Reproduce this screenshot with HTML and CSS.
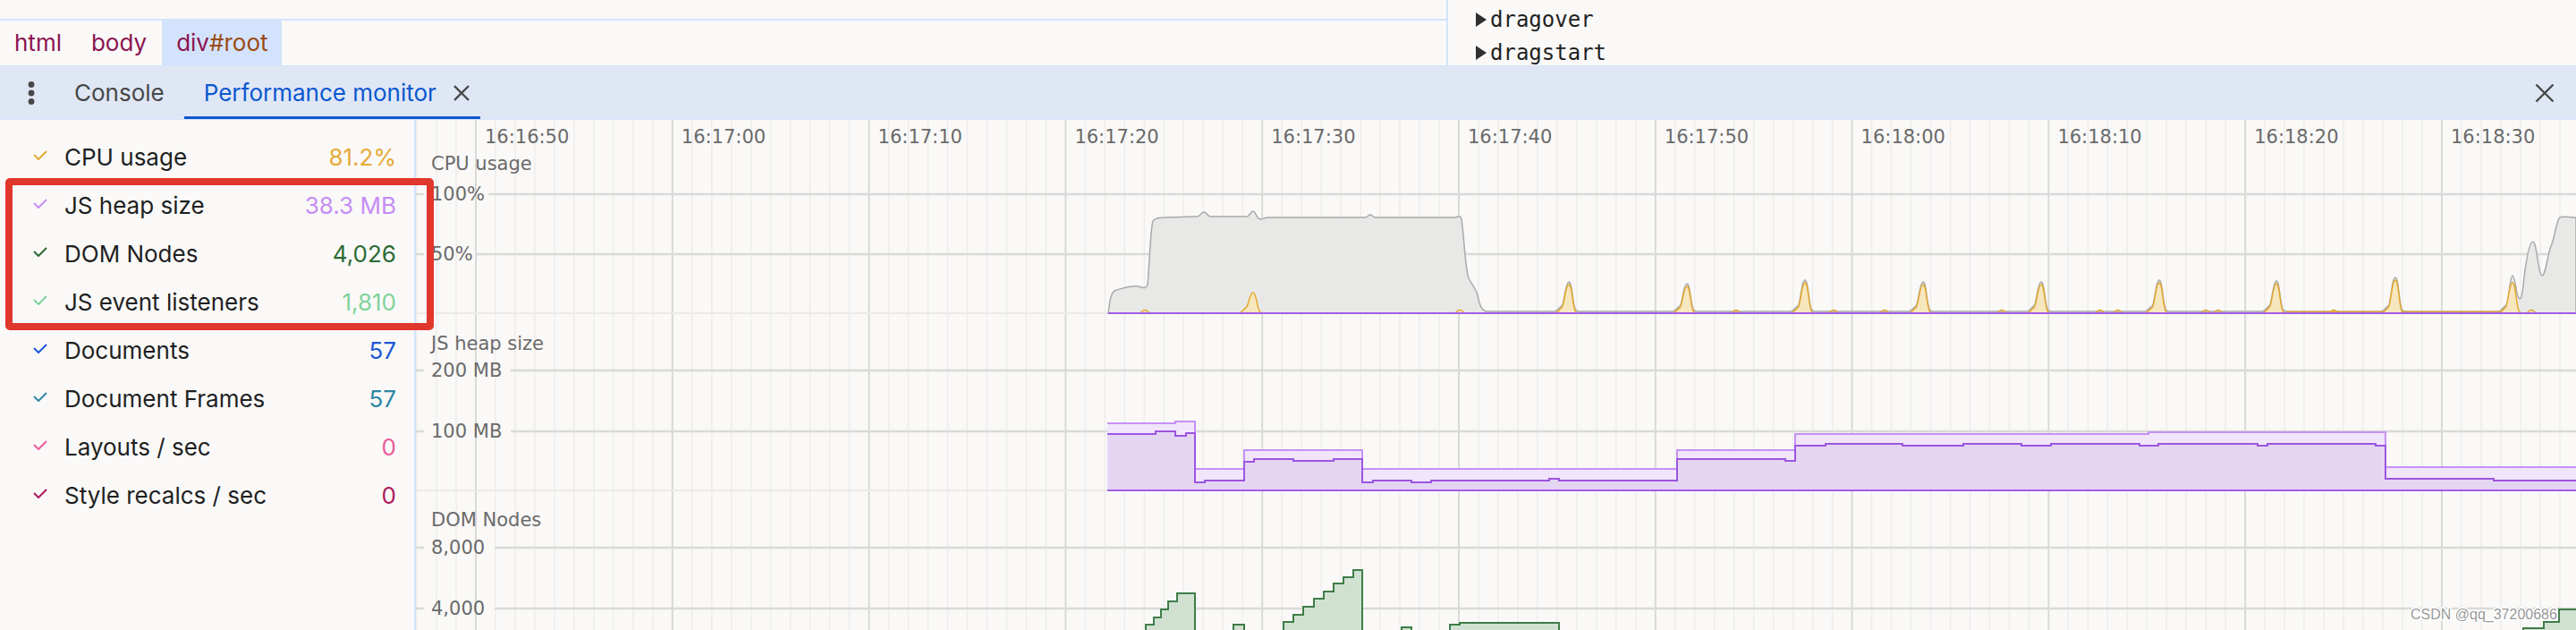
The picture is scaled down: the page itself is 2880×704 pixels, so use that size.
FILE: index.html
```html
<!DOCTYPE html>
<html lang="en">
<head>
    <meta charset="UTF-8">
    <title>DevTools - Performance monitor</title>
    <link rel="stylesheet" href="styles.css">
</head>
<body>
    <div class="top">
        <div class="elements">
            <div class="crumbs">
                <span class="crumb">html</span>
                <span class="crumb">body</span>
                <span class="crumb selected">div<span class="crumb-id">#root</span></span>
            </div>
        </div>
        <div class="listeners">
            <div class="listener"><span class="arrow"></span>dragover</div>
            <div class="listener"><span class="arrow"></span>dragstart</div>
        </div>
    </div>

    <div class="tabbar">
        <div class="menu-dots">
            <svg width="8" height="26" viewBox="0 0 8 26"><circle cx="4" cy="3.5" r="3.4"/><circle cx="4" cy="13" r="3.4"/><circle cx="4" cy="22.5" r="3.4"/></svg>
        </div>
        <div class="tab">Console</div>
        <div class="tab active">Performance monitor
            <svg class="tab-close" width="18" height="18" viewBox="0 0 18 18"><path d="M1 1 L17 17 M17 1 L1 17"/></svg>
        </div>
        <svg class="drawer-close" width="22" height="22" viewBox="0 0 22 22"><path d="M1.5 1.5 L20.5 20.5 M20.5 1.5 L1.5 20.5"/></svg>
    </div>

    <div class="monitor">
        <div class="metrics">
            <div class="metric cpu"><svg class="check" viewBox="0 0 16 11"><polyline points="1,5 6,10 15,1"/></svg><span class="name">CPU usage</span><span class="value">81.2%</span></div>
            <div class="metric heap"><svg class="check" viewBox="0 0 16 11"><polyline points="1,5 6,10 15,1"/></svg><span class="name">JS heap size</span><span class="value">38.3 MB</span></div>
            <div class="metric nodes"><svg class="check" viewBox="0 0 16 11"><polyline points="1,5 6,10 15,1"/></svg><span class="name">DOM Nodes</span><span class="value">4,026</span></div>
            <div class="metric listeners-count"><svg class="check" viewBox="0 0 16 11"><polyline points="1,5 6,10 15,1"/></svg><span class="name">JS event listeners</span><span class="value">1,810</span></div>
            <div class="metric documents"><svg class="check" viewBox="0 0 16 11"><polyline points="1,5 6,10 15,1"/></svg><span class="name">Documents</span><span class="value">57</span></div>
            <div class="metric frames"><svg class="check" viewBox="0 0 16 11"><polyline points="1,5 6,10 15,1"/></svg><span class="name">Document Frames</span><span class="value">57</span></div>
            <div class="metric layouts"><svg class="check" viewBox="0 0 16 11"><polyline points="1,5 6,10 15,1"/></svg><span class="name">Layouts / sec</span><span class="value">0</span></div>
            <div class="metric recalcs"><svg class="check" viewBox="0 0 16 11"><polyline points="1,5 6,10 15,1"/></svg><span class="name">Style recalcs / sec</span><span class="value">0</span></div>
        </div>
        <div class="graphs">
            <svg id="chart" width="2415" height="570" viewBox="465 134 2415 570"></svg>
        </div>
    </div>

    <!-- red annotation around the highlighted metrics -->
    <div class="annotation"></div>

    <script>
        const NS = 'http://www.w3.org/2000/svg';
        const chart = document.getElementById('chart');

        function add(tag, attrs) {
            const el = document.createElementNS(NS, tag);
            for (const k in attrs) el.setAttribute(k, attrs[k]);
            chart.appendChild(el);
            return el;
        }

        function label(x, y, str, cls) {
            const t = add('text', { x: x, y: y, class: cls });
            t.textContent = str;
        }

        function steps(points, endX) {
            let d = 'M' + points[0][0] + ',' + points[0][1];
            for (let i = 1; i < points.length; i++) {
                d += ' H' + points[i][0] + ' V' + points[i][1];
            }
            return d + ' H' + endX;
        }

        // one bell shaped spike, base at y0
        function spike(c, top, y0) {
            return ' L' + (c - 16) + ',' + y0 +
                   ' C' + (c - 12) + ',' + y0 + ' ' + (c - 11) + ',' + (y0 - 5) + ' ' + (c - 8) + ',' + (y0 - 6) +
                   ' C' + (c - 5) + ',' + (y0 - 8) + ' ' + (c - 4) + ',' + top + ' ' + c + ',' + top +
                   ' C' + (c + 4) + ',' + top + ' ' + (c + 4) + ',' + (y0 - 5) + ' ' + (c + 8) + ',' + (y0 - 1) +
                   ' L' + (c + 11) + ',' + y0;
        }

        // grid: one line per second, a darker one every 10 seconds
        const firstMajor = 532;
        const secondPx = 21.98;
        for (let i = -3; i <= 107; i++) {
            const x = firstMajor + i * secondPx;
            add('line', { x1: x, y1: 134, x2: x, y2: 704, class: i % 10 === 0 ? 'grid-major' : 'grid-minor' });
        }

        const times = ['16:16:50', '16:17:00', '16:17:10', '16:17:20', '16:17:30', '16:17:40',
                       '16:17:50', '16:18:00', '16:18:10', '16:18:20', '16:18:30'];
        times.forEach((t, i) => label(firstMajor + i * secondPx * 10 + 10, 160, t, 'axis'));

        // chart bottoms
        [350, 548].forEach(y => add('line', { x1: 465, y1: y, x2: 2880, y2: y, class: 'grid-base' }));

        const rules = [
            { y: 217, text: '100%', from: 546 },
            { y: 284, text: '50%', from: 532 },
            { y: 414, text: '200 MB', from: 571 },
            { y: 482, text: '100 MB', from: 571 },
            { y: 612, text: '8,000', from: 553 },
            { y: 680, text: '4,000', from: 553 }
        ];
        rules.forEach(r => {
            add('line', { x1: 465, y1: r.y, x2: 474, y2: r.y, class: 'grid-rule' });
            add('line', { x1: r.from, y1: r.y, x2: 2880, y2: r.y, class: 'grid-rule' });
            label(482, r.y + 7, r.text, 'axis');
        });

        label(482, 190, 'CPU usage', 'axis');
        label(482, 391, 'JS heap size', 'axis');
        label(482, 588, 'DOM Nodes', 'axis');

        // CPU usage
        const peaks = [[1754, 318], [1886, 320], [2018, 316], [2150, 318], [2282, 318],
                       [2414, 316], [2545, 317], [2678, 313]];
        let cpu = 'M1239,350 C1241,334 1242,326 1248,324 C1256,322 1266,319 1272,320 C1278,321 1281,324 1283,318 ' +
                  'C1285,300 1286,256 1289,247 C1291,244 1296,243 1302,243 L1338,242 C1342,242 1343,237 1346,237 ' +
                  'C1349,237 1350,242 1354,242 L1394,242 C1397,242 1398,236 1401,236 C1404,236 1405,246 1410,245 ' +
                  'C1413,244 1414,243 1420,243 L1526,243 C1529,243 1530,240 1532,240 C1534,240 1535,243 1538,243 ' +
                  'L1626,243 C1630,243 1632,239 1634,245 C1637,265 1638,300 1642,311 C1646,319 1650,322 1652,330 ' +
                  'C1654,340 1656,347 1662,348';
        peaks.forEach(([c, top]) => { cpu += spike(c, top - 3, 348); });
        cpu += ' L2793,348 C2797,348 2798,343 2802,341 C2805,339 2806,308 2809,308 C2812,308 2813,330 2816,333 ' +
               'C2819,336 2820,330 2822,310 C2825,285 2828,270 2832,270 C2836,270 2838,308 2842,308 ' +
               'C2846,308 2848,285 2852,275 C2856,268 2858,245 2862,243 C2866,241 2872,243 2880,243 L2880,350 Z';
        add('path', { d: cpu, class: 'cpu-total' });

        add('line', { x1: 2556, y1: 348.5, x2: 2800, y2: 348.5, class: 'cpu-script-line' });
        [1280, 1632, 1941, 2050, 2107, 2238, 2348, 2368, 2466, 2480, 2609, 2830].forEach(x => {
            add('path', { d: 'M' + (x - 5) + ',350 Q' + x + ',343 ' + (x + 5) + ',350', class: 'cpu-bump' });
        });
        [[1401, 327]].concat(peaks, [[2809, 316]]).forEach(([c, t]) => {
            add('path', { d: 'M' + (c - 16) + ',350' + spike(c, t, 350) + ' Z', class: 'cpu-script' });
        });
        add('line', { x1: 1239, y1: 350, x2: 2880, y2: 350, class: 'purple-base' });

        // JS heap size
        const heapTotal = [[1238, 473], [1314, 471], [1336, 524], [1391, 503], [1523, 524], [1875, 503],
                           [2007, 485], [2402, 483], [2667, 522]];
        const heapUsed = [[1238, 485], [1292, 482], [1314, 487], [1326, 484], [1336, 539], [1347, 537],
                          [1391, 516], [1402, 513], [1446, 515], [1491, 513], [1523, 539], [1535, 537],
                          [1578, 539], [1600, 537], [1732, 535], [1743, 537], [1875, 513], [1996, 515],
                          [2007, 498], [2041, 496], [2127, 498], [2195, 496], [2260, 498], [2293, 496],
                          [2392, 498], [2413, 496], [2524, 498], [2535, 496], [2656, 498], [2667, 535],
                          [2788, 537]];
        add('path', { d: steps(heapTotal, 2880) + ' V548 H1238 Z', class: 'heap-total-fill' });
        add('path', { d: steps(heapUsed, 2880) + ' V548 H1238 Z', class: 'heap-used-fill' });
        add('path', { d: steps(heapTotal, 2880), class: 'heap-total-line' });
        add('path', { d: steps(heapUsed, 2880), class: 'heap-used-line' });
        add('line', { x1: 1238, y1: 548, x2: 2880, y2: 548, class: 'purple-base' });

        // DOM Nodes
        const nodes = [
            [[1281, 698], [1290, 690], [1298, 681], [1306, 672], [1316, 663], [1336, 710]],
            [[1379, 698], [1391, 710]],
            [[1435, 695], [1446, 687], [1457, 678], [1469, 669], [1480, 661], [1491, 652],
             [1502, 645], [1513, 637], [1523, 710]],
            [[1567, 701], [1578, 710]],
            [[1621, 698], [1632, 696], [1743, 710]],
            [[2821, 702], [2844, 695], [2861, 681]]
        ];
        nodes.forEach(seg => {
            const last = seg[seg.length - 1];
            const endX = last[1] === 710 ? last[0] : 2882;
            const pts = last[1] === 710 ? seg.slice(0, -1) : seg;
            add('path', { d: 'M' + pts[0][0] + ',710 V' + pts[0][1] + steps(pts, endX).replace(/^M[^ ]+/, '') + ' V710 Z', class: 'nodes' });
        });

        label(2695, 692, 'CSDN @qq_37200686', 'watermark');
    </script>
</body>
</html>
```

FILE: styles.css
```css
body {
    margin: 0;
    width: 2880px;
    height: 704px;
    overflow: hidden;
    position: relative;
    background: #faf9f8;
    font-family: Inter, "Noto Sans", sans-serif;
    font-size: 26px;
    color: #1f1f1f;
}

/* elements panel strip */
.top {
    display: flex;
    height: 73px;
}

.elements {
    width: 1617px;
    padding-top: 21px;
    box-sizing: border-box;
}

.crumbs {
    display: flex;
    height: 50px;
    line-height: 50px;
    border-top: 2px solid #d3e3fd;
}

.crumb {
    padding: 0 16px;
    margin-right: 1px;
    color: #8b1450;
}

.crumb.selected {
    background: #d3e3fd;
}

.crumb-id {
    color: #9a4a14;
}

.listeners {
    flex: 1;
    border-left: 2px solid #d3e3fd;
    padding: 3px 0 0 31px;
    font-family: "DejaVu Sans Mono", monospace;
    font-size: 24px;
}

.listener {
    display: flex;
    align-items: center;
    height: 37px;
    color: #1f1f1f;
}

.arrow {
    width: 0;
    height: 0;
    border-left: 12px solid #303030;
    border-top: 8px solid transparent;
    border-bottom: 8px solid transparent;
    margin-right: 4px;
}

/* drawer tabs */
.tabbar {
    display: flex;
    align-items: center;
    height: 61px;
    box-sizing: border-box;
    background: #dfe7f5;
    border-top: 1px solid #d3e3fd;
    border-bottom: 1px solid #d3e3fd;
    line-height: 59px;
}

.menu-dots {
    width: 61px;
    display: flex;
    justify-content: center;
    padding-left: 9px;
    box-sizing: border-box;
}

.menu-dots circle {
    fill: #474747;
}

.tab {
    display: flex;
    align-items: center;
    height: 59px;
    padding: 0 22px;
    color: #474747;
}

.tab.active {
    color: #0b57d0;
    padding-right: 12px;
    box-shadow: inset 0 -3px 0 #0b57d0;
}

.tab-close {
    margin-left: 19px;
}

.tab-close path,
.drawer-close path {
    stroke: #474747;
    stroke-width: 2.4;
    fill: none;
}

.drawer-close {
    margin-left: auto;
    margin-right: 24px;
}

/* performance monitor */
.monitor {
    display: flex;
    height: 570px;
}

.metrics {
    width: 463px;
    padding-top: 14px;
    border-right: 2px solid #d3e3fd;
}

.metric {
    display: flex;
    align-items: center;
    height: 54px;
    padding: 0 20px 0 37px;
}

.check {
    width: 16px;
    height: 11px;
    margin: 0 19px 4px 0;
    fill: none;
    stroke-width: 2;
    stroke: currentColor;
}

.name {
    color: #1f1f1f;
}

.value {
    margin-left: auto;
}

.cpu { color: #e6a937; }
.heap { color: #c68df5; }
.nodes { color: #2b6a34; }
.listeners-count { color: #80d39b; }
.documents { color: #1f56d6; }
.frames { color: #2f87a3; }
.layouts { color: #ec5b9b; }
.recalcs { color: #ad1a5b; }

.graphs {
    flex: 1;
}

#chart {
    display: block;
}

.grid-minor {
    stroke: #eeedeb;
    stroke-width: 1.5;
}

.grid-major {
    stroke: #d9d9d7;
    stroke-width: 2;
}

.grid-rule {
    stroke: #dadad8;
    stroke-width: 2.5;
}

.grid-base {
    stroke: #ecebea;
    stroke-width: 2;
}

.axis {
    font-family: "DejaVu Sans", sans-serif;
    font-size: 21px;
    fill: #6a6a6a;
}

.cpu-total {
    fill: #e8e8e7;
    stroke: #a9a9a9;
    stroke-width: 1.5;
}

.cpu-script {
    fill: #f7e7bf;
    stroke: #e5a82e;
    stroke-width: 1.5;
}

.cpu-script-line,
.cpu-bump {
    fill: none;
    stroke: #e5a82e;
    stroke-width: 1.5;
}

.purple-base {
    stroke: #a35ee6;
    stroke-width: 2;
}

.heap-total-fill {
    fill: #f0e5fa;
}

.heap-used-fill {
    fill: #e4d5f3;
}

.heap-total-line {
    fill: none;
    stroke: #c791f5;
    stroke-width: 2;
}

.heap-used-line {
    fill: none;
    stroke: #9d55e0;
    stroke-width: 2;
}

.graphs .nodes {
    fill: #d0e1d2;
    stroke: #3f7d48;
    stroke-width: 2;
}

.watermark {
    font-family: "Liberation Sans", Arial, sans-serif;
    font-size: 16px;
    fill: #999;
    stroke: #fff;
    stroke-width: 3px;
    paint-order: stroke;
}

.annotation {
    position: absolute;
    left: 6px;
    top: 199px;
    width: 479px;
    height: 170px;
    box-sizing: border-box;
    border: 8px solid #e0362c;
    border-radius: 5px;
}
```
